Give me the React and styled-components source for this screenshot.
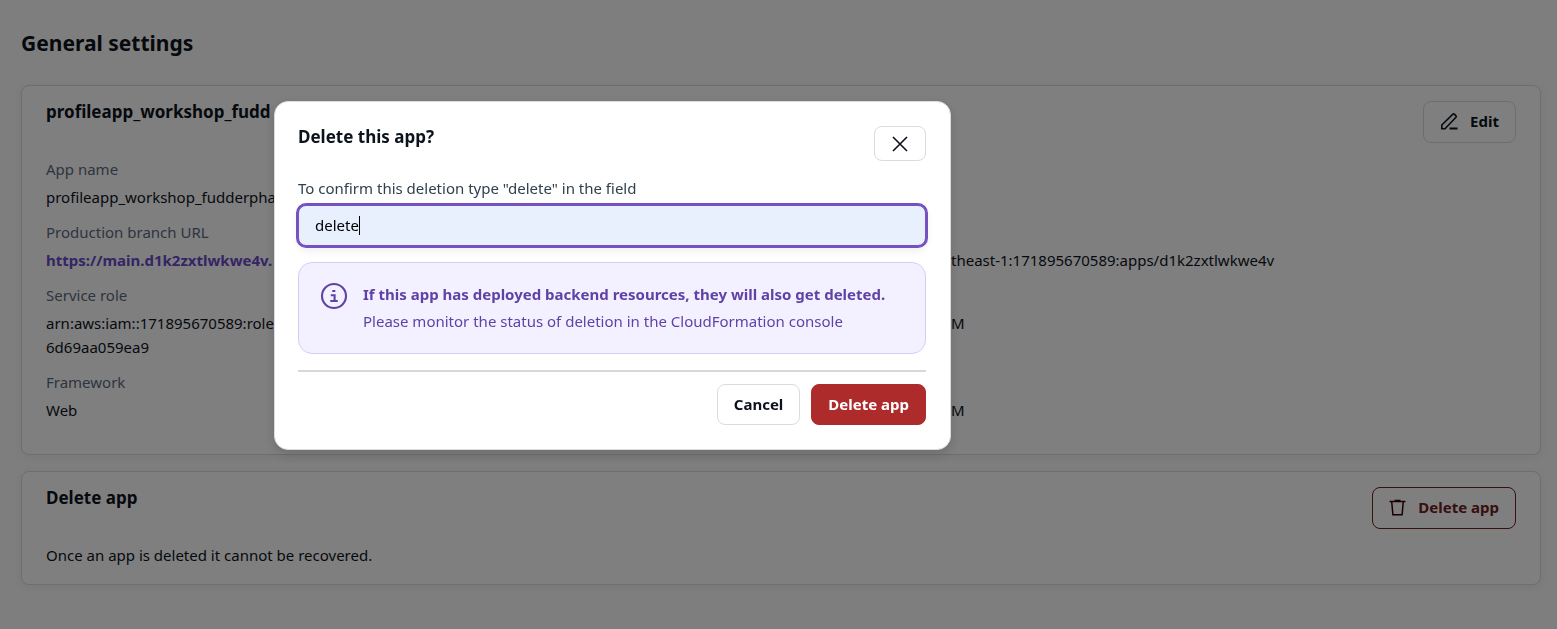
import React from "react";
import styled, { createGlobalStyle, css } from "styled-components";

const Global = createGlobalStyle`
  *, *::before, *::after { box-sizing: border-box; }
  body {
    margin: 0;
    min-height: 100vh;
    background: #fcfcfc;
    color: #0d131c;
    font-family: "Noto Sans", "Open Sans", sans-serif;
    font-size: 15px;
    line-height: 24px;
  }
  h1, h2, p, dl, dd { margin: 0; }
  button, input { font: inherit; }
`;

const Page = styled.main`
  padding: 28px 16px 44px 21px;
`;

const PageTitle = styled.h1`
  font-size: 21px;
  line-height: 30px;
  font-weight: 700;
  margin-bottom: 27px;
`;

const CardStack = styled.div`
  display: flex;
  flex-direction: column;
  gap: 16px;
`;

const Card = styled.section`
  background: #fff;
  border: 1px solid #dcdcde;
  border-radius: 8px;
  padding: 15px 24px ${(p) => (p.$roomy ? 32 : 17)}px;
  box-shadow: 0 2px 8px rgba(13, 26, 38, 0.06);
`;

const CardHeader = styled.header`
  display: flex;
  justify-content: space-between;
  align-items: flex-start;
  margin-bottom: 14px;
`;

const Title = styled.h2`
  font-size: 17px;
  line-height: 22px;
  font-weight: 700;
`;

const kinds = {
  plain: css`
    background: #fff;
    border-color: #dcdcde;
    color: #0d131c;
  `,
  danger: css`
    background: #fff;
    border-color: #6e2020;
    color: #6e2020;
  `,
  solid: css`
    background: #ad2b2b;
    border-color: #ad2b2b;
    color: #fff;
  `,
};

const Button = styled.button`
  display: inline-flex;
  align-items: center;
  justify-content: center;
  gap: 12px;
  min-height: ${(p) => (p.$tall ? 42 : 41)}px;
  padding: 0 16px 2px;
  border: 1px solid;
  border-radius: 8px;
  font-weight: 700;
  cursor: pointer;
  ${(p) => kinds[p.$kind || "plain"]}
`;

const Details = styled.dl`
  display: grid;
  grid-template-columns: 905fr 565fr;
  row-gap: 11px;
`;

const Detail = styled.div`
  ${(p) => p.$wide && "grid-column: 1 / -1;"}
  ${(p) => p.$bare && "padding-top: 28px;"}
  dt { color: #5c6b80; margin-bottom: 4px; }
`;

const SiteLink = styled.a`
  color: #6b4acb;
  font-weight: 700;
  text-decoration: none;
`;

const Backdrop = styled.div`
  position: fixed;
  inset: 0;
  padding: 101px 24px 24px 274px;
  background: rgba(0, 0, 0, 0.5);
`;

const Dialog = styled.div`
  width: 100%;
  max-width: 677px;
  padding: 24px 24px 24px 23px;
  background: #fff;
  border: 1px solid #dcdcde;
  border-radius: 14px;
  box-shadow: 0 4px 12px rgba(0, 0, 0, 0.15);
`;

const DialogHeader = styled.header`
  display: flex;
  justify-content: space-between;
  align-items: flex-start;
  margin-bottom: 15px;
`;

const CloseButton = styled(Button)`
  min-height: 35px;
  width: 52px;
  padding: 0;
`;

const FieldLabel = styled.label`
  display: block;
  color: #304050;
  margin-bottom: 5px;
`;

const Field = styled.div`
  position: relative;
`;

const TextField = styled.input`
  display: block;
  width: 100%;
  height: 41px;
  padding: 0 16px 2px;
  border: 1px solid #7551c2;
  border-radius: 8px;
  outline: none;
  background: #e8f0fe;
  color: #000;
  caret-color: transparent;
  box-shadow: 0 0 0 2px #7551c2, 0 4px 10px rgba(0, 0, 0, 0.08);
`;

const Caret = styled.span`
  position: absolute;
  left: 61px;
  top: 11px;
  width: 1px;
  height: 19px;
  background: #000;
  pointer-events: none;
`;

const Notice = styled.div`
  display: flex;
  gap: 15px;
  margin: 16px 0;
  padding: 18px 21px;
  min-height: 92px;
  background: #f3f0ff;
  border: 1px solid #d6cdf7;
  border-radius: 14px;
  color: #6042a6;
  line-height: 27px;
  svg { flex: none; margin-top: 1px; }
`;

const Divider = styled.hr`
  height: 2px;
  margin: 0 0 12px;
  border: 0;
  background: #d5d9de;
`;

const Actions = styled.footer`
  display: flex;
  justify-content: flex-end;
  gap: 11px;
`;

const PencilIcon = () => (
  <svg width="18" height="18" viewBox="0 0 18 18" fill="none" stroke="currentColor" strokeWidth="1.6" aria-hidden="true">
    <path d="M1.8 16.7V13L12.9 2.2Q13.6 1.6 14.3 2.2L16 3.9Q16.6 4.6 16 5.2L5 16.7Z" />
    <path d="M9.5 16.5H17.5" strokeWidth="2" />
  </svg>
);

const TrashIcon = () => (
  <svg width="17" height="18" viewBox="0 0 17 18" fill="none" stroke="#35000a" strokeWidth="1.5" aria-hidden="true">
    <path d="M0.5 3.5H16.5M5.5 2.5H11.5M2.7 3.5L3.9 16.7H13.1L14.3 3.5" />
  </svg>
);

const CloseIcon = () => (
  <svg width="16" height="16" viewBox="0 0 16 16" fill="none" stroke="currentColor" strokeWidth="1.6" aria-hidden="true">
    <path d="M1 1L15 15M15 1L1 15" />
  </svg>
);

const InfoIcon = () => (
  <svg width="28" height="28" viewBox="0 0 28 28" fill="none" stroke="currentColor" strokeWidth="2.1" aria-hidden="true">
    <circle cx="14" cy="14" r="12" />
    <path d="M12.3 9H15.3M10.8 13.2H14.6V19M10.3 19H17.8" />
  </svg>
);

export default function App() {
  return (
    <>
      <Global />
      <Page>
        <PageTitle>General settings</PageTitle>
        <CardStack>
          <Card $roomy>
            <CardHeader>
              <Title>profileapp_workshop_fudd</Title>
              <Button type="button" $tall><PencilIcon />Edit</Button>
            </CardHeader>
            <Details>
              <Detail $wide>
                <dt>App name</dt>
                <dd>profileapp_workshop_fudderpha</dd>
              </Detail>
              <Detail>
                <dt>Production branch URL</dt>
                <dd><SiteLink href="#main">https://main.d1k2zxtlwkwe4v.</SiteLink></dd>
              </Detail>
              <Detail $bare>
                <dd>theast-1:171895670589:apps/d1k2zxtlwkwe4v</dd>
              </Detail>
              <Detail>
                <dt>Service role</dt>
                <dd>arn:aws:iam::171895670589:role<br />6d69aa059ea9</dd>
              </Detail>
              <Detail $bare>
                <dd>M</dd>
              </Detail>
              <Detail>
                <dt>Framework</dt>
                <dd>Web</dd>
              </Detail>
              <Detail $bare>
                <dd>M</dd>
              </Detail>
            </Details>
          </Card>
          <Card>
            <CardHeader>
              <Title>Delete app</Title>
              <Button type="button" $tall $kind="danger"><TrashIcon />Delete app</Button>
            </CardHeader>
            <p>Once an app is deleted it cannot be recovered.</p>
          </Card>
        </CardStack>
      </Page>
      <Backdrop>
        <Dialog role="dialog" aria-modal="true" aria-labelledby="dialog-title">
          <DialogHeader>
            <Title id="dialog-title">Delete this app?</Title>
            <CloseButton type="button" aria-label="Close"><CloseIcon /></CloseButton>
          </DialogHeader>
          <FieldLabel htmlFor="confirm">To confirm this deletion type "delete" in the field</FieldLabel>
          <Field>
            <TextField id="confirm" type="text" defaultValue="delete" autoFocus />
            <Caret aria-hidden="true" />
          </Field>
          <Notice>
            <InfoIcon />
            <div>
              <strong>If this app has deployed backend resources, they will also get deleted.</strong>
              <p>Please monitor the status of deletion in the CloudFormation console</p>
            </div>
          </Notice>
          <Divider />
          <Actions>
            <Button type="button">Cancel</Button>
            <Button type="button" $kind="solid">Delete app</Button>
          </Actions>
        </Dialog>
      </Backdrop>
    </>
  );
}
